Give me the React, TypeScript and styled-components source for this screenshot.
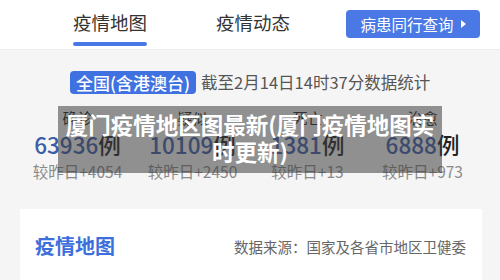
import React from 'react';
import styled, {createGlobalStyle} from 'styled-components';

const blue = '#4a78e4';
const darkblue = '#3c5da8';
const text = '#333333';
const gray = '#8a8a8a';

const GlobalStyle = createGlobalStyle`
    body {
        margin: 0;
        background: #f5f5f5;
        font-family: "Noto Sans CJK SC", "Noto Sans", sans-serif;
    }
`

const Page = styled.div`
    width: 500px;
    height: 280px;
    overflow: hidden;
    position: relative;
    background: #f5f5f5;
`

const Header = styled.div`
    height: 50px;
    background: #ffffff;
    border-bottom: 1px solid #ececec;
    display: flex;
    align-items: stretch;
    padding-left: 73px;
    padding-right: 20px;
    box-sizing: border-box;
`

const Tabs = styled.div`
    display: flex;
    gap: 69px;
`

type TabProps = {
    active?: boolean
}

const Tab = styled.div`
    position: relative;
    flex-shrink: 0;
    white-space: nowrap;
    font-size: 18.5px;
    color: ${text};
    padding-top: 9px;

    &::after{
        content: '';
        display: ${({active}: TabProps) => active ? 'block' : 'none'};
        position: absolute;
        left: 0;
        right: 0;
        bottom: 3px;
        height: 4px;
        border-radius: 2px;
        background: ${blue};
    }
`

const QueryButton = styled.div`
    margin-left: auto;
    flex-shrink: 0;
    white-space: nowrap;
    align-self: flex-start;
    margin-top: 10px;
    height: 28px;
    width: 134px;
    border-radius: 4px;
    background: ${blue};
    color: #ffffff;
    font-size: 15.5px;
    display: flex;
    align-items: center;
    justify-content: center;
    gap: 7px;
`

const Arrow = styled.span`
    width: 0;
    height: 0;
    border-top: 4px solid transparent;
    border-bottom: 4px solid transparent;
    border-left: 5px solid #ffffff;
`

const Summary = styled.div`
    padding: 20px 20px 0 20px;
`

const Scope = styled.div`
    display: flex;
    align-items: center;
    padding-left: 50px;
    gap: 5px;
    white-space: nowrap;
`

const Badge = styled.span`
    background: #3f72e0;
    color: #ffffff;
    font-size: 17px;
    font-weight: 500;
    line-height: 23px;
    padding: 0 6px;
    border-radius: 4px;
`

const Stamp = styled.span`
    font-size: 16.5px;
    color: #555555;
`

const Stats = styled.div`
    display: grid;
    grid-template-columns: repeat(4, 1fr);
    margin-top: 13px;
`

const Stat = styled.div`
    display: flex;
    flex-direction: column;
    align-items: center;
    white-space: nowrap;
`

const Label = styled.div`
    font-size: 15px;
    color: #222222;
    line-height: 22px;
`

const Count = styled.div`
    font-size: 22.5px;
    font-weight: 500;
    color: ${darkblue};
    line-height: 31px;
`

const Unit = styled.span`
    color: #222222;
`

const Delta = styled.div`
    font-size: 15.5px;
    color: ${gray};
    line-height: 22px;
`

const Card = styled.div`
    margin: 27px 18px 0 20px;
    background: #ffffff;
    height: 80px;
    display: flex;
    align-items: flex-start;
    justify-content: space-between;
    padding: 22px 16px 0 15px;
    white-space: nowrap;
`

const CardTitle = styled.div`
    font-size: 20px;
    font-weight: 700;
    color: #3d6fdc;
`

const Source = styled.div`
    font-size: 14.5px;
    color: #666666;
    margin-top: 5px;
`

const Overlay = styled.div`
    position: absolute;
    left: 58px;
    top: 106px;
    width: 384px;
    height: 67px;
    background: rgba(60, 60, 60, 0.55);
    color: #ffffff;
    font-size: 22.5px;
    font-weight: 700;
    line-height: 27px;
    text-align: center;
    padding-top: 5px;
    box-sizing: border-box;
    white-space: nowrap;
`

const stats = [
    {label: '确诊', count: '63936', delta: '+4054'},
    {label: '疑似', count: '10109', delta: '+2450'},
    {label: '死亡', count: '1381', delta: '+13'},
    {label: '治愈', count: '6888', delta: '+973'},
]

export default function App(){
 return(
  <>
  <GlobalStyle/>
  <Page>
    <Header>
        <Tabs>
            <Tab active={true}>疫情地图</Tab>
            <Tab>疫情动态</Tab>
        </Tabs>
        <QueryButton>病患同行查询<Arrow/></QueryButton>
    </Header>
    <Summary>
        <Scope>
            <Badge>全国(含港澳台)</Badge>
            <Stamp>截至2月14日14时37分数据统计</Stamp>
        </Scope>
        <Stats>
            {
                stats.map(s => (
                    <Stat key={s.label}>
                        <Label>{s.label}</Label>
                        <Count>{s.count}<Unit>例</Unit></Count>
                        <Delta>较昨日{s.delta}</Delta>
                    </Stat>
                ))
            }
        </Stats>
    </Summary>
    <Card>
        <CardTitle>疫情地图</CardTitle>
        <Source>数据来源：国家及各省市地区卫健委</Source>
    </Card>
    <Overlay>厦门疫情地区图最新(厦门疫情地图实<br/>时更新)</Overlay>
  </Page>
  </>
 )
}
